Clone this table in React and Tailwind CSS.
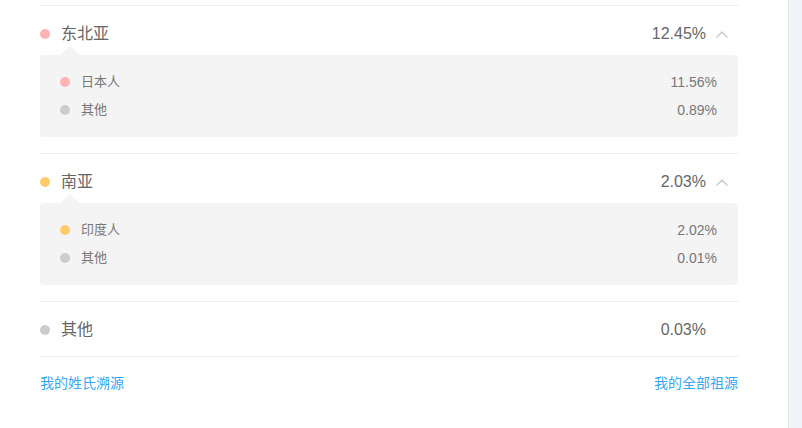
const groups = [
  {
    name: '东北亚',
    value: '12.45%',
    color: 'bg-[#ffb4b4]',
    items: [
      { name: '日本人', value: '11.56%', color: 'bg-[#ffb4b4]' },
      { name: '其他', value: '0.89%', color: 'bg-[#cccccc]' },
    ],
  },
  {
    name: '南亚',
    value: '2.03%',
    color: 'bg-[#ffcb6b]',
    items: [
      { name: '印度人', value: '2.02%', color: 'bg-[#ffcb6b]' },
      { name: '其他', value: '0.01%', color: 'bg-[#cccccc]' },
    ],
  },
  { name: '其他', value: '0.03%', color: 'bg-[#cccccc]', items: [] },
]

function Chevron() {
  return (
    <svg width="12" height="7" viewBox="0 0 12 7" fill="none">
      <path d="M1 6L6 1.2L11 6" stroke="#cfcfcf" strokeWidth="1.6" strokeLinecap="round" strokeLinejoin="round" />
    </svg>
  )
}

function Group({ group }) {
  const open = group.items.length > 0
  return (
    <div className={`border-t border-[#ececec] ${open ? 'pb-4' : 'pb-4'}`}>
      {/* header row */}
      <div className={`flex items-center h-5 mt-[18px] ${open ? 'mb-[11px]' : ''}`}>
        <span className={`w-2.5 h-2.5 rounded-full ${group.color}`} />
        <span className="ml-[11px] text-[16px] leading-5 text-[#666]">{group.name}</span>
        <span className="ml-auto text-[16px] leading-5 text-[#666]">{group.value}</span>
        <div className="w-8 flex items-center pl-[10px]">{open && <Chevron />}</div>
      </div>

      {open && (
        <div className="relative bg-[#f4f4f4] rounded pl-5 pr-[21px] py-[13px]">
          <div className="absolute -top-[9px] left-5 w-0 h-0 border-x-[10px] border-x-transparent border-b-[9px] border-b-[#f4f4f4]" />
          {group.items.map((item) => (
            <div key={item.name} className="flex items-center h-7">
              <span className={`w-2.5 h-2.5 rounded-full ${item.color}`} />
              <span className="ml-[11px] text-[13px] leading-5 text-[#777]">{item.name}</span>
              <span className="ml-auto text-[14px] leading-5 text-[#777]">{item.value}</span>
            </div>
          ))}
        </div>
      )}
    </div>
  )
}

export default function App() {
  return (
    <div
      className="flex w-[802px] h-[428px] bg-white overflow-hidden"
      style={{ fontFamily: '"Liberation Sans", "Noto Sans CJK SC", sans-serif' }}
    >
      <div className="flex-1 pl-10 pr-[50px] pt-[5px]">
        {groups.map((g, i) => (
          <Group key={i} group={g} />
        ))}
        <div className="border-t border-[#ececec] pt-4 flex justify-between text-[14px] leading-5 text-[#35a8f3]">
          <span>我的姓氏溯源</span>
          <span>我的全部祖源</span>
        </div>
      </div>
      <div className="w-[14px] h-full border-l border-[#e6e9ee] bg-[#f1f4f8]" />
    </div>
  )
}
